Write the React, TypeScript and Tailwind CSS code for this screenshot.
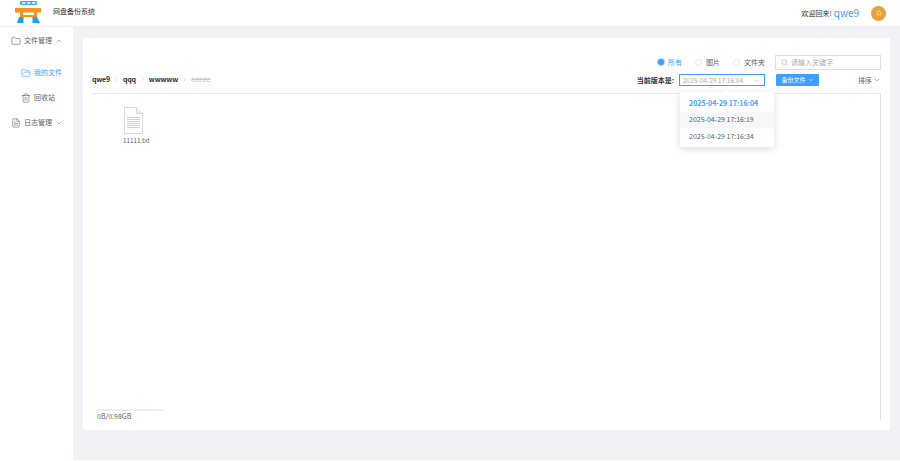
import { ChevronDown, ChevronRight, ChevronUp, Folder, FolderOpen, Search, Star, Trash2, FileText } from 'lucide-react'

const font = '[font-family:"Noto_Sans_CJK_SC","Noto_Sans",sans-serif]'

function Logo() {
  return (
    <svg width="26" height="23" viewBox="0 0 26 23" className="block">
      <rect x="5" y="1" width="17" height="4" rx="1" fill="#3fa9f5" />
      <rect x="7" y="2" width="3.5" height="2" fill="#cfe9fc" />
      <rect x="12" y="2" width="3.5" height="2" fill="#cfe9fc" />
      <rect x="17" y="2" width="3.5" height="2" fill="#cfe9fc" />
      <rect x="0" y="8" width="26.5" height="4.5" fill="#f7931e" />
      <rect x="5" y="12" width="3" height="5" fill="#f7931e" />
      <rect x="19" y="12" width="3" height="5" fill="#f7931e" />
      <rect x="8" y="15" width="12" height="2" fill="#f7931e" />
      <path d="M4 17h4.5v6H2zM17.500 17H22l3 6h-7.500z" fill="#18a5f2" />
    </svg>
  )
}

function Radio({ label, active }: { label: string; active?: boolean }) {
  return (
    <div className="flex items-center gap-[4px]">
      {active ? (
        <span className="w-[6px] h-[6px] rounded-full bg-[#409eff] ring-1 ring-[#409eff]/40" />
      ) : (
        <span className="w-[7px] h-[7px] rounded-full border border-[#e4e7ed]" />
      )}
      <span className={active ? 'text-[#409eff]' : 'text-[#606266]'}>{label}</span>
    </div>
  )
}

function Crumb({ children }: { children: string }) {
  return (
    <>
      <span className="font-bold text-[#303133] tracking-[-0.2px]">{children}</span>
      <ChevronRight size={7} className="text-[#c0c4cc]" />
    </>
  )
}

export default function App() {
  return (
    <div className={`${font} w-[900px] h-[461px] overflow-hidden bg-white text-[7px] leading-none text-[#606266] flex flex-col`}>
      <header className="h-[27px] shrink-0 flex items-center pl-[15px] pr-[14px] border-b border-[#eceef1] overflow-hidden">
        <div className="self-start">
          <Logo />
        </div>
        <span className="ml-[12px] -mt-[3px] text-[#303133]">网盘备份系统</span>
        <span className="ml-auto text-[#303133]">欢迎回来!</span>
        <span className="ml-[2px] text-[10px] text-[#409eff]">qwe9</span>
        <span className="ml-[12px] w-[15px] h-[15px] rounded-full bg-[#e6a23c] flex items-center justify-center">
          <Star size={6} className="text-white" />
        </span>
      </header>

      <div className="flex flex-1 min-h-0">
        <aside className="w-[73px] shrink-0 pt-[7px] text-[#606266]">
          <div className="h-[13px] flex items-center pl-[11px]">
            <Folder size={10} strokeWidth={1.4} className="text-[#606266]" />
            <span className="ml-[3px]">文件管理</span>
            <ChevronUp size={8} className="ml-[3px] text-[#909399]" />
          </div>
          <div className="h-[13px] mt-[19px] flex items-center pl-[21px] text-[#409eff]">
            <FolderOpen size={10} strokeWidth={1.4} />
            <span className="ml-[3px]">我的文件</span>
          </div>
          <div className="h-[13px] mt-[12px] flex items-center pl-[21px]">
            <Trash2 size={10} strokeWidth={1.4} />
            <span className="ml-[3px]">回收站</span>
          </div>
          <div className="h-[13px] mt-[12px] flex items-center pl-[11px]">
            <FileText size={10} strokeWidth={1.4} />
            <span className="ml-[3px]">日志管理</span>
            <ChevronDown size={8} className="ml-[3px] text-[#909399]" />
          </div>
        </aside>

        <main className="flex-1 bg-[#f0f2f5] pl-[10px] pr-[10px] pt-[11px] pb-[30px] mb-[1px]">
          <div className="relative h-full bg-white flex flex-col pl-[9px] pr-[9px] rounded-[2px]">
            <div className="flex items-center justify-end gap-[13px] pt-[17px] h-[31px]">
              <Radio label="所有" active />
              <Radio label="图片" />
              <Radio label="文件夹" />
              <div className="w-[106px] h-[15px] -ml-[3px] border border-[#dcdfe6] flex items-center pl-[5px] gap-[3px] text-[#a8abb2]">
                <Search size={7} />
                <span>请输入关键字</span>
              </div>
            </div>

            <div className="h-[25px] flex items-center border-b border-[#e4e7ed] pt-[1px] pb-[3px]">
              <div className="flex items-center gap-[3px] -mt-[1px]">
                <Crumb>qwe9</Crumb>
                <Crumb>qqq</Crumb>
                <Crumb>wwwww</Crumb>
                <span className="text-[#a8abb2]">eeeee</span>
              </div>
              <div className="ml-auto flex items-center">
                <span className="font-bold text-[#303133]">当前版本是:</span>
                <div className="ml-[5px] w-[86px] h-[12px] border border-[#409eff] flex items-center px-[3px] text-[#a8abb2] text-[6.5px]">
                  <span>2025-04-29 17:16:04</span>
                  <ChevronUp size={7} className="ml-auto mr-[1px]" />
                </div>
                <div className="ml-[11px] w-[43px] h-[12px] rounded-[1px] bg-[#409eff] text-white flex items-center justify-center gap-[2px] text-[6px]">
                  <span>备份文件</span>
                  <ChevronDown size={6} />
                </div>
                <span className="ml-[39px]">排序</span>
                <ChevronDown size={8} className="ml-[1px] text-[#909399]" />
              </div>
            </div>

            <div className="flex-1 min-h-0 border-r border-[#dcdfe6] mb-[10px] pt-[13px] pl-[31px]">
              <div className="w-[21px] flex flex-col items-start">
                <svg width="21" height="27" viewBox="0 0 21 27" className="block">
                  <path d="M1.500 .5h12l6 6v20h-18z" fill="#fff" stroke="#d9d9d9" />
                  <path d="M13.500 .5v6h6" fill="#f0f0f0" stroke="#d9d9d9" />
                  <path d="M4 10.500h13M4 12.500h13M4 14.500h13M4 16.500h13M4 18.500h13M4 20.500h13" stroke="#cfcfcf" />
                </svg>
                <span className="mt-[4px] whitespace-nowrap text-[6.3px] text-[#606266]">11111.txt</span>
              </div>
            </div>

            <div className="absolute left-[14px] top-[371px] w-[67px]">
              <div className="h-[2px] bg-[#ebeef5]" />
              <div className="mt-[2px] whitespace-nowrap text-[#606266]">0B/0.98GB</div>
            </div>

            <div className="absolute left-[597px] top-[54px] w-[94px] bg-white rounded-[2px] pt-[3px] pb-[2.5px] shadow-[0_2px_8px_rgba(0,0,0,0.14)] text-[7px]">
              <div className="absolute left-[43px] -top-[2px] w-[5px] h-[5px] rotate-45 bg-white" />
              <div className="relative h-[16.5px] flex items-center pl-[9px] font-bold text-[#409eff]">2025-04-29 17:16:04</div>
              <div className="relative h-[16.5px] flex items-center pl-[9px] bg-[#f5f7fa]">2025-04-29 17:16:19</div>
              <div className="relative h-[16.5px] flex items-center pl-[9px]">2025-04-29 17:16:34</div>
            </div>
          </div>
        </main>
      </div>
    </div>
  )
}
